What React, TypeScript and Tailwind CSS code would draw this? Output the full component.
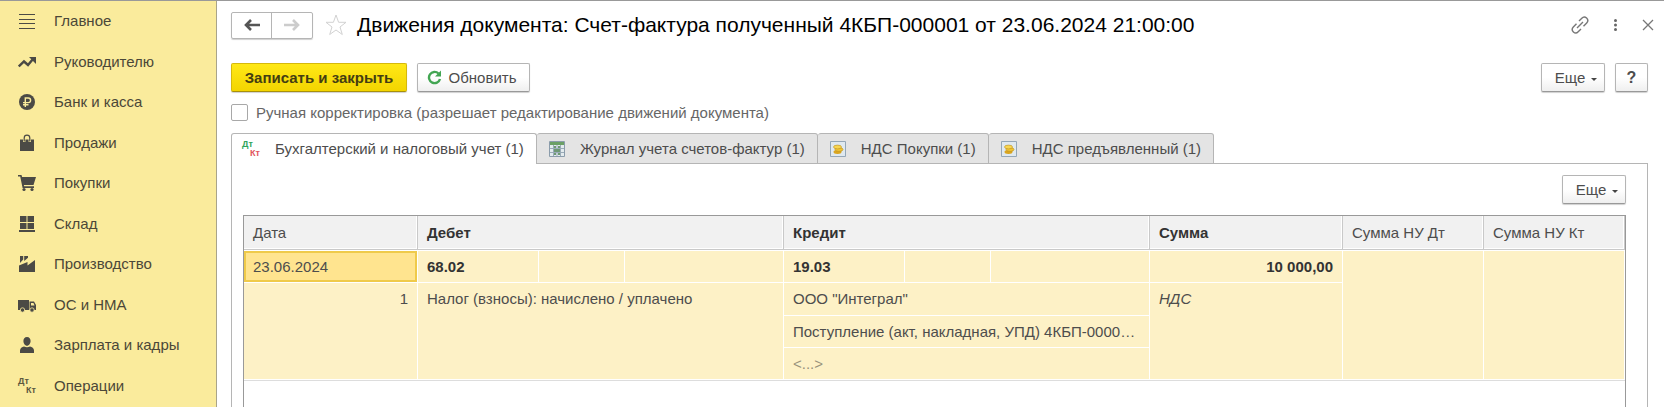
import { useState } from 'react';
import type { ReactNode } from 'react';

const DtKt = ({ colored = false }: { colored?: boolean }) => (
  <span className="flex w-[18px] flex-col text-left text-[9px] leading-[9px] font-bold" aria-hidden="true">
    <span className={colored ? 'text-[#2fa55c]' : 'text-[#5c583f]'}>Дт</span>
    <span className={colored ? 'self-end text-[#e2555c]' : 'self-end text-[#5c583f]'}>Кт</span>
  </span>
);

const Icon = ({ children }: { children: ReactNode }) => (
  <svg className="h-[18px] w-[18px]" viewBox="0 0 18 18" fill="#4b4a45" aria-hidden="true">
    {children}
  </svg>
);

const menu: { label: string; icon: ReactNode }[] = [
  {
    label: 'Главное',
    icon: <Icon><path d="M1 2h16v1H1zM1 7h16v1H1zM1 11h16v1H1zM1 16h16v1H1z" /></Icon>,
  },
  {
    label: 'Руководителю',
    icon: (
      <Icon>
        <path d="M.8 13.500L6 8.500l4 3.500 5-6" fill="none" stroke="#4b4a45" strokeWidth="2.400" />
        <path d="M11 4h7v7z" />
      </Icon>
    ),
  },
  {
    label: 'Банк и касса',
    icon: (
      <Icon>
        <circle cx="9" cy="9" r="8" />
        <path d="M7.300 14V5h3a2.300 2.300 0 0 1 0 4.600H5M5 11.800h5.500" fill="none" stroke="#faeb9c" strokeWidth="1.400" />
      </Icon>
    ),
  },
  {
    label: 'Продажи',
    icon: (
      <Icon>
        <path d="M2 5.500h14V17H2z" />
        <path d="M6.200 8V4a2.800 2.800 0 0 1 5.600 0v4" fill="none" stroke="#faeb9c" strokeWidth="2.400" />
        <path d="M6.200 7.500V4a2.800 2.800 0 0 1 5.600 0v3.500" fill="none" stroke="#4b4a45" strokeWidth="1.200" />
      </Icon>
    ),
  },
  {
    label: 'Покупки',
    icon: (
      <Icon>
        <path d="M0 1h3.500l.6 2H18l-2.500 8H5.800l.4 1.300H16V14H4.600L2.200 2.600H0z" />
        <circle cx="6" cy="15.500" r="1.600" />
        <circle cx="14" cy="15.500" r="1.600" />
      </Icon>
    ),
  },
  {
    label: 'Склад',
    icon: <Icon><path d="M2 1h6.500v6H2zM9.500 1H16v6H9.500zM2 8h6.500v6H2zM9.500 8H16v6H9.500zM1 15h16v2H1z" /></Icon>,
  },
  {
    label: 'Производство',
    icon: <Icon><path d="M1 17v-6.500L9.500 7v3.500L17 5v12zM2 1h3.200v3.500L2 8zM6.200 1H10v1.800L6.200 6z" /></Icon>,
  },
  {
    label: 'ОС и НМА',
    icon: (
      <Icon>
        <path d="M0 4h11v10H0zM11.500 5.500H16L18 9v5h-6.500z" />
        <path d="M13 7h2.500l1 2.500H13z" fill="#faeb9c" />
        <circle cx="4.500" cy="14" r="2.200" stroke="#faeb9c" strokeWidth=".8" />
        <circle cx="14" cy="14" r="2.200" stroke="#faeb9c" strokeWidth=".8" />
      </Icon>
    ),
  },
  {
    label: 'Зарплата и кадры',
    icon: <Icon><path d="M9 1c2.400 0 3.600 1.700 3.600 4S11 9.800 9 9.800 5.400 7.300 5.400 5 6.600 1 9 1zM2 17v-2.500C2 12 4 11 6 10.500c2 1 4 1 6 0 2 .5 4 1.500 4 4V17z" /></Icon>,
  },
  { label: 'Операции', icon: <DtKt /> },
];

const SheetIcon = () => (
  <svg className="h-4 w-4" viewBox="0 0 16 16" aria-hidden="true">
    <path d="M.5.5h15v15H.5z" fill="#e3ebee" stroke="#8b9cab" />
    <path d="M1 1h14v3H1z" fill="#6ba065" />
    <path d="M4.500 4v11M8 4v11M11.500 4v11M1 7.500h14M1 11.500h14" stroke="#9aabb8" />
    <path d="M5 5h2v2H5zM9 5h2v2H9zM5 8h6v3H5zM5 12h2v2H5zM9 12h2v2H9z" fill="#6f9a74" />
  </svg>
);

const CoinsIcon = () => (
  <svg className="h-4 w-4" viewBox="0 0 16 16" aria-hidden="true">
    <path d="M.5.5h15v15H.5z" fill="#dfe9f0" stroke="#94a7b8" />
    <ellipse cx="7.500" cy="11" rx="4" ry="1.900" fill="#d9a520" />
    <ellipse cx="9" cy="8.500" rx="4" ry="1.900" fill="#f0c535" stroke="#b98b1c" strokeWidth=".6" />
    <ellipse cx="7.500" cy="6" rx="4" ry="1.900" fill="#f7d652" stroke="#b98b1c" strokeWidth=".6" />
  </svg>
);

const tabs: { label: string; icon: ReactNode }[] = [
  { label: 'Бухгалтерский и налоговый учет (1)', icon: <DtKt colored /> },
  { label: 'Журнал учета счетов-фактур (1)', icon: <SheetIcon /> },
  { label: 'НДС Покупки (1)', icon: <CoinsIcon /> },
  { label: 'НДС предъявленный (1)', icon: <CoinsIcon /> },
];

const buttonStyle =
  'flex items-center justify-center rounded-[2px] border border-[#b5b5b5] border-b-[#999] bg-linear-to-b from-white from-50% to-[#efefef] shadow-[0_1px_1px_#d0d0d0]';

const MoreButton = () => (
  <button type="button" className={`${buttonStyle} h-[29px] w-16 gap-1.5 pl-1.5`}>
    Еще
    <svg className="h-1.5 w-1.5" viewBox="0 0 6 6" fill="#444" aria-hidden="true">
      <path d="M0 3h6L3 6z" />
    </svg>
  </button>
);

const Arrow = ({ className }: { className: string }) => (
  <svg className={`h-3 w-4 ${className}`} viewBox="0 0 16 12" fill="none" stroke="currentColor" strokeWidth="2.600" aria-hidden="true">
    <path d="M2 6h14M7 1L2 6l5 5" />
  </svg>
);

const Postings = () => {
  const th = 'h-[34px] border-r border-b border-[#c9c9c9] px-[9px] text-left shadow-[inset_-1px_-1px_#fff]';
  const td = 'border-r border-b border-white px-[9px]';

  return (
    <table className="w-full table-fixed border-separate border-spacing-0 border-b border-[#ddd]">
      <colgroup>
        <col className="w-[174px]" />
        <col className="w-[121px]" />
        <col className="w-[86px]" />
        <col />
        <col className="w-[121px]" />
        <col className="w-[86px]" />
        <col />
        <col className="w-[193px]" />
        <col className="w-[141px]" />
        <col className="w-[141px]" />
      </colgroup>
      <thead className="bg-[#f1f1f1]">
        <tr>
          <th className={`${th} font-normal`}>Дата</th>
          <th colSpan={3} className={`${th} text-[#333]`}>Дебет</th>
          <th colSpan={3} className={`${th} text-[#333]`}>Кредит</th>
          <th className={`${th} text-[#333]`}>Сумма</th>
          <th className={`${th} font-normal`}>Сумма НУ Дт</th>
          <th className={`${th} font-normal`}>Сумма НУ Кт</th>
        </tr>
      </thead>
      <tbody className="bg-[#fdf1c6]">
        <tr className="h-[33px]">
          <td className={`${td} border-t bg-[#ffe48f] shadow-[inset_0_0_0_2px_#efca4a]`}>23.06.2024</td>
          <td className={`${td} border-t font-bold text-[#333]`}>68.02</td>
          <td className={`${td} border-t`} />
          <td className={`${td} border-t`} />
          <td className={`${td} border-t font-bold text-[#333]`}>19.03</td>
          <td className={`${td} border-t`} />
          <td className={`${td} border-t`} />
          <td className={`${td} border-t text-right font-bold text-[#333]`}>10 000,00</td>
          <td rowSpan={4} className={`${td} border-t`} />
          <td rowSpan={4} className={`${td} border-t`} />
        </tr>
        <tr className="h-[33px]">
          <td rowSpan={3} className={`${td} pt-2 text-right align-top`}>1</td>
          <td rowSpan={3} colSpan={3} className={`${td} pt-2 align-top`}>Налог (взносы): начислено / уплачено</td>
          <td colSpan={3} className={td}>ООО "Интеграл"</td>
          <td rowSpan={3} className={`${td} pt-2 align-top italic`}>НДС</td>
        </tr>
        <tr className="h-8">
          <td colSpan={3} className={`${td} truncate`}>Поступление (акт, накладная, УПД) 4КБП-0000…</td>
        </tr>
        <tr className="h-8">
          <td colSpan={3} className={`${td} text-[#98927c]`}>&lt;...&gt;</td>
        </tr>
      </tbody>
    </table>
  );
};

const App = () => {
  const [activeTab, setActiveTab] = useState(0);
  const [manual, setManual] = useState(false);

  return (
    <div className="flex min-h-screen border-t border-[#999] bg-white font-['Liberation_Sans',Arial,sans-serif] text-[15px] leading-4 text-[#4d4d4d]">
      {/* Sections */}
      <nav className="w-[217px] shrink-0 border-r border-[#a9a48a] bg-[#faeb9c]">
        <ul className="grid h-[405px] auto-rows-fr">
          {menu.map((item) => (
            <li key={item.label}>
              <a href="#" className="flex h-full items-center gap-[18px] pl-[18px] text-[#4b4738]">
                {item.icon}
                {item.label}
              </a>
            </li>
          ))}
        </ul>
      </nav>

      <main className="flex min-w-0 flex-1 flex-col pt-2.5 pl-3.5">
        {/* Title bar */}
        <header className="flex h-7 items-center pr-2.5">
          <div className="flex rounded-[2px] border border-[#b5b5b5] shadow-[0_1px_1px_#d0d0d0]">
            <button type="button" aria-label="Назад" className="flex h-[25px] w-10 items-center justify-center border-r border-[#b5b5b5]">
              <Arrow className="text-[#555]" />
            </button>
            <button type="button" aria-label="Вперед" className="flex h-[25px] w-10 items-center justify-center">
              <Arrow className="rotate-180 text-[#ccc]" />
            </button>
          </div>
          <button type="button" aria-label="В избранное" className="ml-3">
            <svg className="h-[22px] w-[22px]" viewBox="0 0 22 22" fill="none" stroke="#d2d2d2" aria-hidden="true">
              <path d="M11 1l2.600 7.300H21l-6 4.700 2.300 7.500L11 16l-6.300 4.500L7 13 1 8.300h7.400z" />
            </svg>
          </button>
          <h1 className="ml-2.5 flex-1 text-[21px] leading-6 text-black">
            Движения документа: Счет-фактура полученный 4КБП-000001 от 23.06.2024 21:00:00
          </h1>
          <div className="flex items-center gap-[25px]">
            <button type="button" aria-label="Ссылка">
              <svg className="h-[18px] w-[18px]" viewBox="0 0 18 18" fill="none" stroke="#777" strokeWidth="1.400" aria-hidden="true">
                <path d="M6 12l6-6M8 5l2.800-2.800a3.300 3.300 0 0 1 4.900 4.700L12.500 10.200M10 13l-2.800 2.800a3.300 3.300 0 0 1-4.900-4.700L5.500 7.800" />
              </svg>
            </button>
            <button type="button" aria-label="Меню">
              <svg className="h-3 w-[3px]" viewBox="0 0 3 12" fill="#666" aria-hidden="true">
                <circle cx="1.500" cy="1.500" r="1.500" />
                <circle cx="1.500" cy="6" r="1.500" />
                <circle cx="1.500" cy="10.500" r="1.500" />
              </svg>
            </button>
            <button type="button" aria-label="Закрыть">
              <svg className="h-3 w-3" viewBox="0 0 12 12" stroke="#777" strokeWidth="1.300" aria-hidden="true">
                <path d="M1 1l10 10M11 1L1 11" />
              </svg>
            </button>
          </div>
        </header>

        {/* Commands */}
        <div className="mt-6 flex items-center gap-2.5 pr-4">
          <button type="button" className="h-[29px] w-44 rounded-[2px] border border-[#d5b80c] border-b-[#a8900a] bg-linear-to-b from-[#ffe815] to-[#f3d500] font-bold text-[#443d12] shadow-[0_1px_1px_#d0d0d0]">
            Записать и закрыть
          </button>
          <button type="button" className={`${buttonStyle} h-[29px] w-[113px] gap-[7px] pr-1`}>
            <svg className="h-[15px] w-[15px]" viewBox="0 0 15 15" aria-hidden="true">
              <path d="M11.500 3.500A5.600 5.600 0 1 0 13 9" fill="none" stroke="#43a653" strokeWidth="2.400" />
              <path d="M14 .5v6H8z" fill="#43a653" />
            </svg>
            Обновить
          </button>
          <div className="ml-auto flex gap-2.5">
            <MoreButton />
            <button type="button" className={`${buttonStyle} h-[29px] w-[33px] text-base font-bold`}>?</button>
          </div>
        </div>

        <label className="mt-3 flex items-center gap-2 text-[#666]">
          <input
            type="checkbox"
            checked={manual}
            onChange={(e) => setManual(e.target.checked)}
            className="h-[17px] w-[17px] appearance-none rounded-[2px] border border-[#a8a8a8] bg-white checked:bg-[#ffe815]"
          />
          Ручная корректировка (разрешает редактирование движений документа)
        </label>

        {/* Registers */}
        <div role="tablist" className="z-10 mt-3 flex">
          {tabs.map((tab, i) => (
            <button
              key={tab.label}
              type="button"
              role="tab"
              aria-selected={activeTab === i}
              onClick={() => setActiveTab(i)}
              className={`flex h-[31px] items-center gap-[15px] rounded-t-[3px] border-t border-r border-[#b5b5b5] px-3 first:border-l first:pl-2.5 ${
                activeTab === i ? 'bg-white' : 'border-b bg-[#e4e4e4]'
              }`}
            >
              {tab.icon}
              {tab.label}
            </button>
          ))}
        </div>
        <section role="tabpanel" className="-mt-px mr-4 flex flex-1 flex-col border-x border-t border-[#b5b5b5] px-[11px] pt-[11px]">
          <div className="flex justify-end pr-2.5">
            <MoreButton />
          </div>
          <div className="mt-[11px] mr-2.5 flex-1 border-x border-t border-[#999]">
            <Postings />
          </div>
        </section>
      </main>
    </div>
  );
};

export default App;
